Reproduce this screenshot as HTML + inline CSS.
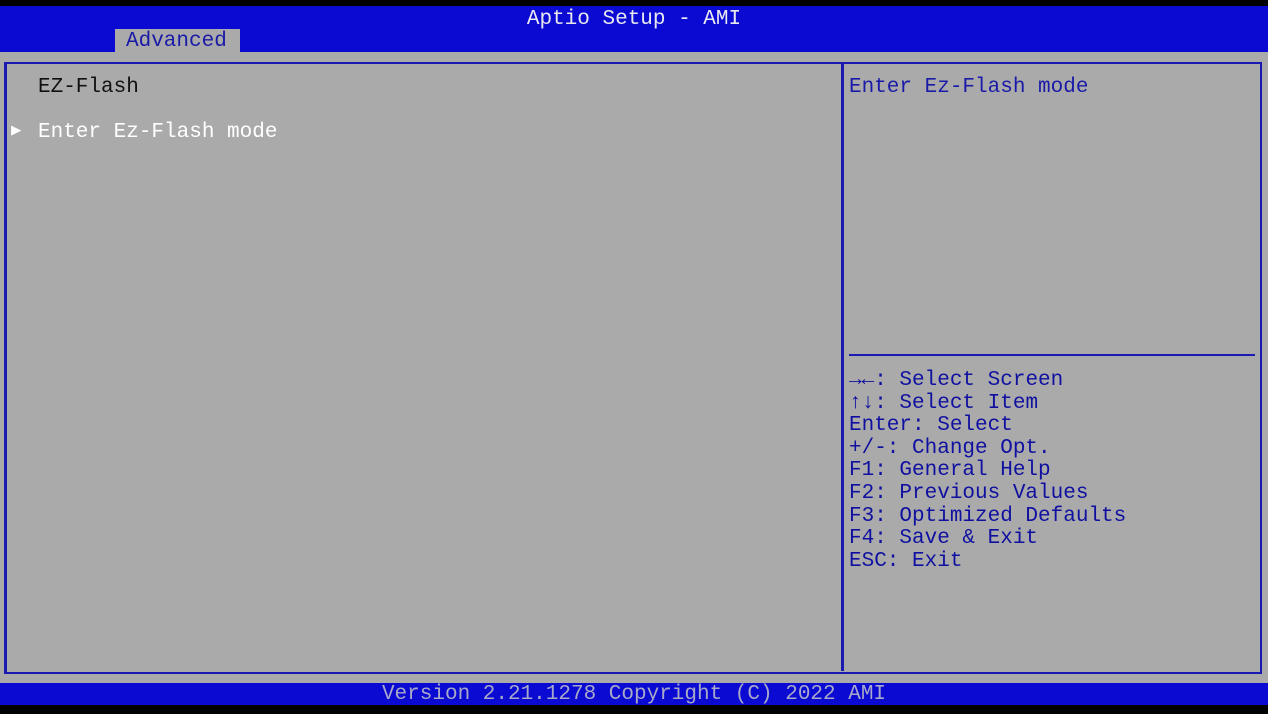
<!DOCTYPE html>
<html><head><style>
*{margin:0;padding:0}
body{width:1268px;height:714px;background:#000;position:relative;overflow:hidden;font-family:"Liberation Mono",monospace;font-size:21px}
.a{position:absolute;white-space:pre;line-height:22px}
</style></head><body>
<div class="a" style="left:0;top:6px;width:1268px;height:46px;background:#0a0ad2"></div>
<div class="a" style="left:0;top:9px;width:1268px;text-align:center;color:#e8e8f0">Aptio Setup - AMI</div>
<div class="a" style="left:115px;top:29px;width:125px;height:23px;background:#aaaaaa"></div>
<div class="a" style="left:126px;top:31px;color:#1a1aa8">Advanced</div>
<div class="a" style="left:0;top:52px;width:1268px;height:631px;background:#aaaaaa"></div>
<div class="a" style="left:4px;top:62px;width:1253px;height:608px;border:2px solid #1a1ab0;border-left-width:3px"></div>
<div class="a" style="left:841px;top:63px;width:3px;height:608px;background:#1a1ab0"></div>
<div class="a" style="left:849px;top:354px;width:406px;height:2px;background:#1a1ab0"></div>
<div class="a" style="left:38px;top:77px;color:#111">EZ-Flash</div>
<div class="a" style="left:11px;top:121px;color:#fff;font-size:17px">▶</div>
<div class="a" style="left:38px;top:122px;color:#fff">Enter Ez-Flash mode</div>
<div class="a" style="left:849px;top:77px;color:#1a1aa8">Enter Ez-Flash mode</div>
<div class="a" style="left:849px;top:370px;color:#1010a0;line-height:22.6px"><b>→←</b>: Select Screen
<b>↑↓</b>: Select Item
Enter: Select
+/-: Change Opt.
F1: General Help
F2: Previous Values
F3: Optimized Defaults
F4: Save &amp; Exit
ESC: Exit</div>
<div class="a" style="left:0;top:683px;width:1268px;height:22px;background:#0a0ad2"></div>
<div class="a" style="left:0;top:684px;width:1268px;text-align:center;color:#a8a8c8">Version 2.21.1278 Copyright (C) 2022 AMI</div>
</body></html>
